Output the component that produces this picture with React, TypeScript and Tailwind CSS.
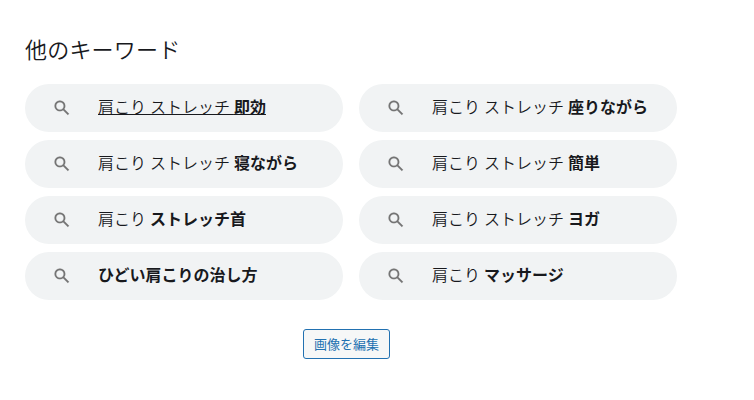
type Keyword = { plain?: string; bold: string; active?: boolean };

const keywords: Keyword[] = [
  { plain: '肩こり ストレッチ', bold: '即効', active: true },
  { plain: '肩こり ストレッチ', bold: '座りながら' },
  { plain: '肩こり ストレッチ', bold: '寝ながら' },
  { plain: '肩こり ストレッチ', bold: '簡単' },
  { plain: '肩こり', bold: 'ストレッチ首' },
  { plain: '肩こり ストレッチ', bold: 'ヨガ' },
  { bold: 'ひどい肩こりの治し方' },
  { plain: '肩こり', bold: 'マッサージ' },
];

function SearchIcon() {
  return (
    <svg viewBox="0 0 24 24" className="size-5 shrink-0 fill-[#747474] stroke-[#747474] stroke-[0.2]">
      <path d="M20.49 19l-5.73-5.73C15.53 12.2 16 10.91 16 9.5A6.5 6.5 0 1 0 9.5 16c1.41 0 2.7-.47 3.77-1.24L19 20.49 20.49 19zM5 9.5C5 7.01 7.01 5 9.5 5S14 7.01 14 9.5 11.99 14 9.5 14 5 11.99 5 9.5z" />
    </svg>
  );
}

export default function App() {
  return (
    <div className="h-[400px] w-[754px] bg-white pl-[25px] pt-8 font-['Noto_Sans_CJK_JP',sans-serif] text-[#18191d]">
      <h1 className="h-[52px] whitespace-nowrap text-[22px] font-[350] leading-8 tracking-[0.2px]">他のキーワード</h1>
      <div className="grid w-[652px] grid-cols-2 gap-x-4 gap-y-2">
        {keywords.map(({ plain, bold, active }) => (
          <div key={bold} className="flex h-12 items-center rounded-full bg-[#f1f3f4] pl-[27px]">
            <SearchIcon />
            <span
              className={`ml-[26px] whitespace-nowrap pb-1 text-[16px] font-[350] leading-6 [word-spacing:0.4px] ${active ? 'underline decoration-1 underline-offset-[1px] [text-decoration-skip-ink:none]' : ''}`}
            >
              {plain && `${plain} `}
              <b className="font-bold">{bold}</b>
            </span>
          </div>
        ))}
      </div>
      <div className="flex w-[643px] justify-center pt-[29px]">
        <button className="h-[30px] w-[87px] whitespace-nowrap rounded-[3px] border border-[#2271b1] bg-[#f6f7f7] text-[13px] font-normal text-[#2271b1]">
          画像を編集
        </button>
      </div>
    </div>
  );
}
